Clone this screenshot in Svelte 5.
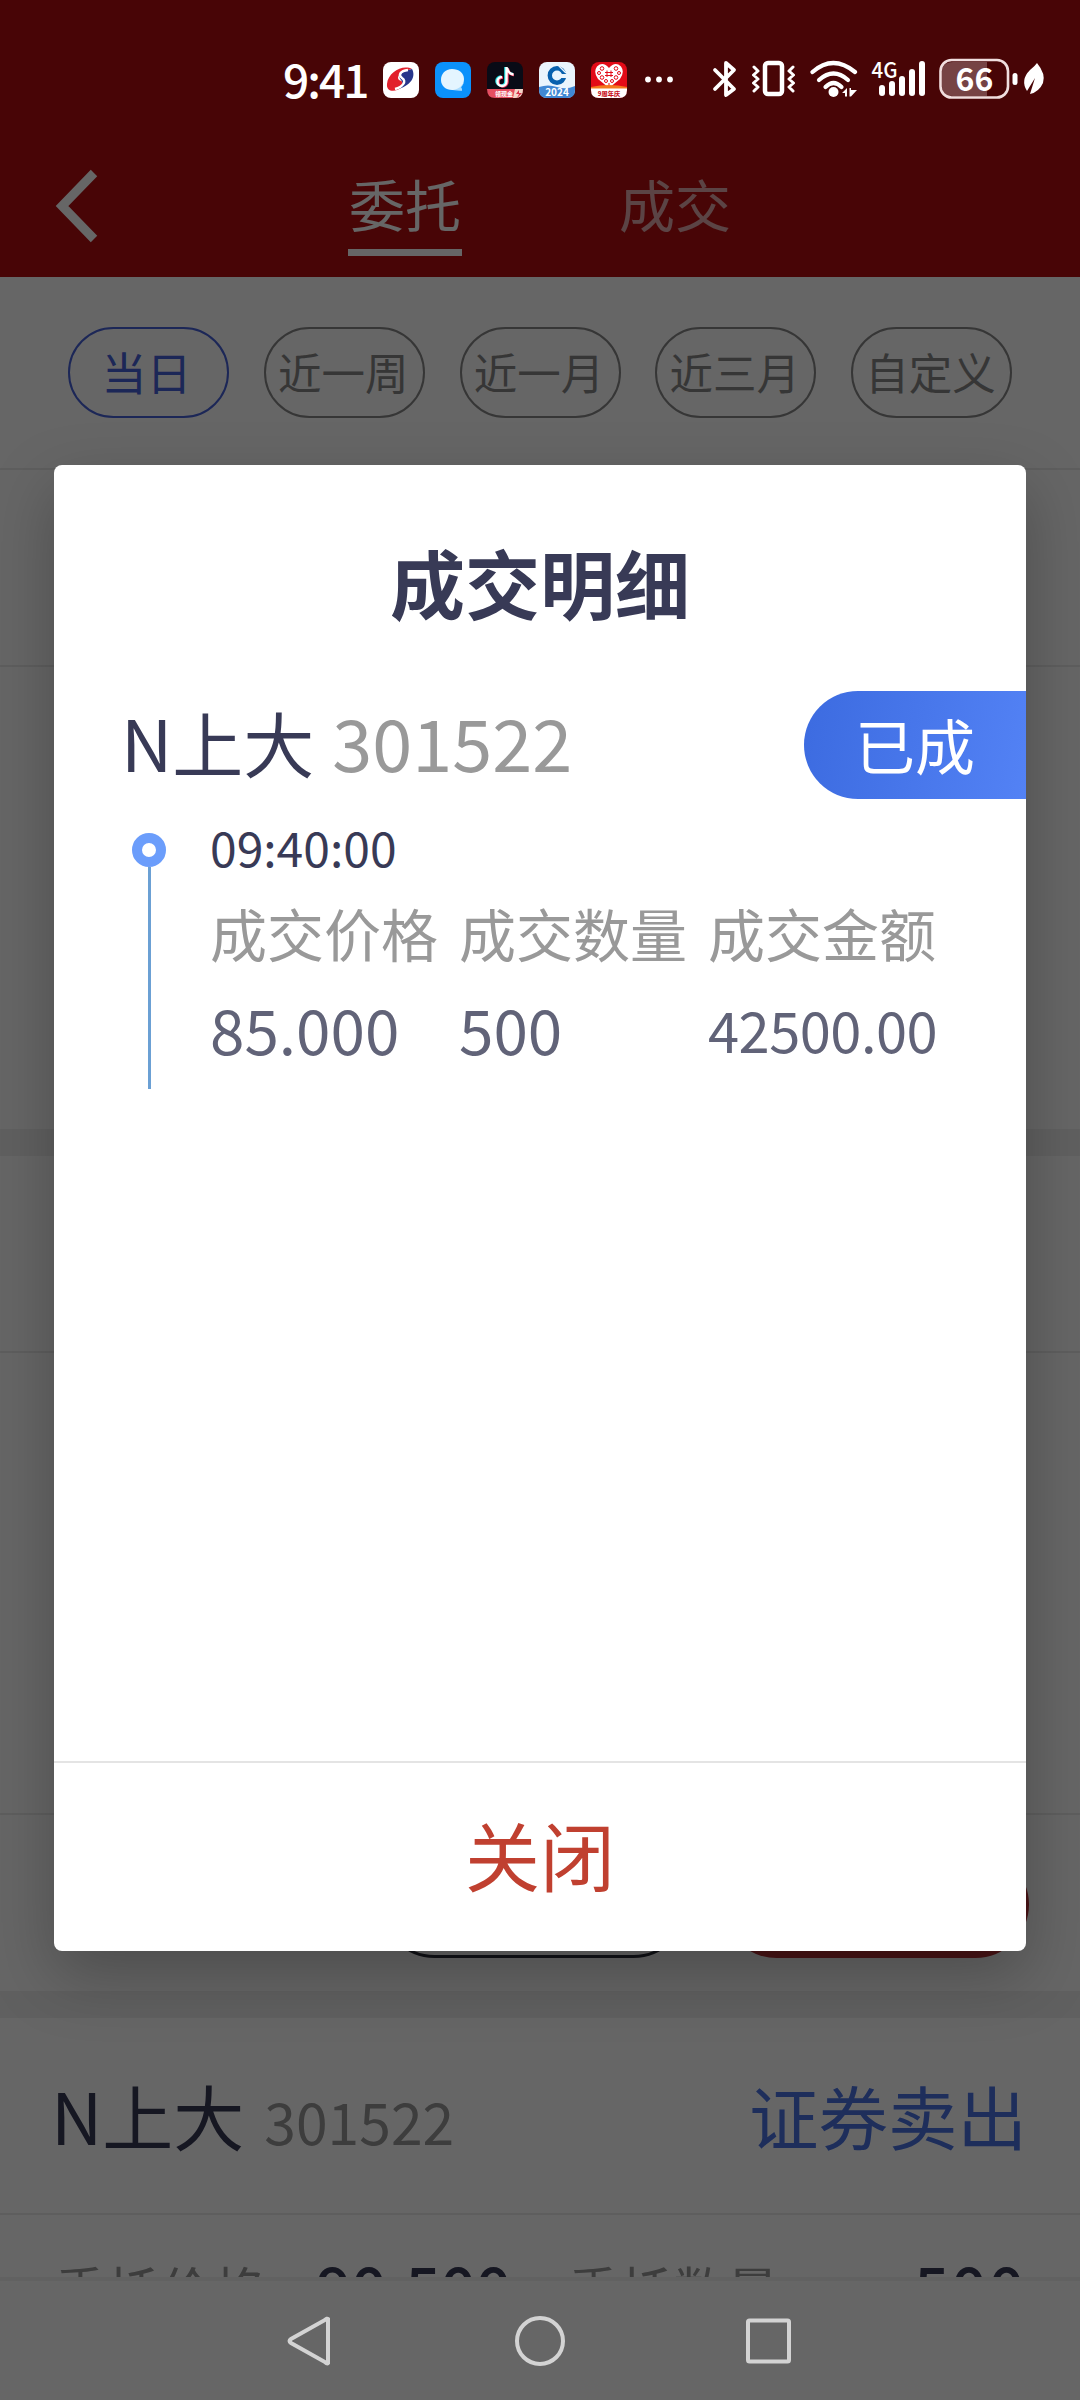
<script>
	let ranges = ['当日', '近一周', '近一月', '近三月', '自定义'];
	let selected = '当日';

	let stock = { name: 'N上大', code: '301522' };

	let deal = {
		time: '09:40:00',
		status: '已成',
		fields: [
			{ label: '成交价格', value: '85.000' },
			{ label: '成交数量', value: '500' },
			{ label: '成交金额', value: '42500.00', small: true }
		]
	};

	let showDetail = true;

	function selectRange(range) {
		selected = range;
	}

	function closeDetail() {
		showDetail = false;
	}
</script>

<main>
	<div class="page">
		<header>
			<div class="tabs">
				<svg class="back" viewBox="0 0 44 74"><path d="M40 4 L8 37 L40 70" fill="none" stroke="#fff" stroke-width="9" /></svg>
				<span class="tab active">委托</span>
				<span class="tab">成交</span>
			</div>
		</header>

		<div class="ranges">
			{#each ranges as range}
			<button class:selected={selected === range} on:click={() => selectRange(range)}>{range}</button>
			{/each}
		</div>

		<div class="order first">
			<div class="order-head"></div>
		</div>

		<div class="order second">
			<div class="order-head"></div>
			<div class="order-body"></div>
			<div class="order-actions">
				<div class="action"></div>
				<div class="action fill"></div>
			</div>
		</div>

		<div class="order last">
			<div class="order-head">
				<span class="name">{stock.name}</span>
				<span class="code">{stock.code}</span>
				<span class="side">证券卖出</span>
			</div>
			<div class="order-row">
				<span class="key">委托价格</span>
				<b>90.500</b>
				<span class="key second-key">委托数量</span>
				<b class="end">500</b>
			</div>
		</div>

		<div class="nav-bg"></div>
	</div>

	<div class="mask"></div>

	<div class="status-bar">
		<span class="clock">9:41</span>
		<svg class="app" viewBox="0 0 36 36">
			<rect width="36" height="36" rx="8" fill="#fff" />
			<path d="M29 7 C20 2 5 10 4 22 C3 31 14 30 19 25 C22 21 19 19 16 18 C13 15 17 9 29 7Z" fill="#e2202c" />
			<path d="M29 7 C33 14 29 24 12 28 C19 25 21 21 18 18 C14 14 19 9 29 7Z" fill="#27368b" />
			<path d="M25 8 C17 9 15 13 19 16 C24 19 20 25 12 27" fill="none" stroke="#fff" stroke-width="2.4" />
		</svg>
		<svg class="app" viewBox="0 0 36 36">
			<rect width="36" height="36" rx="8" fill="#0b91fb" />
			<path d="M17 7 C10 7 6 12 6 18 C6 24 11 28 17 28 L27 28.5 L26 25 C28 23 29 20 29 17 C29 11 24 7 17 7Z" fill="#e4f5ff" />
			<path d="M29 18 C29 23 24 27 18 28 L27 28.5 L26 25 C28 23 29 21 29 18Z" fill="#a9dcff" />
		</svg>
		<svg class="app" viewBox="0 0 36 36">
			<rect width="36" height="36" rx="8" fill="#090b16" />
			<path d="M18.500 5 V19 A4.500 4.500 0 1 1 14 14.500 M19 6 C20 10 22 12 26 12" fill="none" stroke="#25e5e8" stroke-width="2.600" />
			<path d="M20.500 6 V20 A4.500 4.500 0 1 1 16 15.500 M21 7 C22 11 24 13 27 13" fill="none" stroke="#f63b62" stroke-width="2.400" />
			<path d="M19.500 5 V19.500 A4.500 4.500 0 1 1 15 15 M20 6 C21 10 23 12 26.500 12.500" fill="none" stroke="#fff" stroke-width="2.400" />
			<path d="M0 27 H36 Q36 36 28 36 H8 Q0 36 0 27Z" fill="#e64e60" />
			<path d="M28 27 H36 Q36 36 28 36 L26 36Z" fill="#f5d5c8" />
			<path d="M32 28 L29 32 H32 L30 36 L35 31 H32Z" fill="#d83048" />
			<text x="8" y="34" font-size="6" font-weight="700" fill="#fff">领现金</text>
		</svg>
		<svg class="app" viewBox="0 0 36 36">
			<rect width="36" height="36" rx="8" fill="#eaf5fd" />
			<path d="M0 25 Q9 22 18 25 T36 24 V28 Q36 36 28 36 H8 Q0 36 0 28Z" fill="#4088d4" />
			<circle cx="18" cy="13.5" r="7.2" fill="none" stroke="#0861ae" stroke-width="4.4" />
			<path d="M18 9.5 L22 13.5 L18 17.5 L14 13.5Z M20.500 12 H30 V16 H20.500Z" fill="#eaf5fd" />
			<path d="M20 4 L27 11" stroke="#eaf5fd" stroke-width="1.4" />
			<text x="18" y="34" text-anchor="middle" font-size="10" font-weight="700" fill="#fff">2024</text>
		</svg>
		<svg class="app" viewBox="0 0 36 36">
			<rect width="36" height="36" rx="8" fill="#e30b17" />
			<path d="M18 26 L7 17 Q2 10 6 4.500 Q12 -1 18 6 Q24 -1 30 4.500 Q34 10 29 17Z" fill="#fff" />
			<g fill="none" stroke="#e30b17" stroke-width="1">
				<circle cx="11" cy="6.500" r="1.800" /><circle cx="25" cy="6.500" r="1.800" />
				<circle cx="8" cy="11" r="1.500" /><circle cx="28" cy="11" r="1.500" />
				<circle cx="11" cy="15.500" r="1.800" /><circle cx="25" cy="15.500" r="1.800" />
				<circle cx="15" cy="19" r="1.500" /><circle cx="21" cy="19" r="1.500" />
				<path d="M16 8.500 V15 M20 8.500 V15 M14 10.500 H22 M14 13.500 H22 M18 21 V24" />
			</g>
			<path d="M0 25 Q18 21 36 25 V28 H0Z" fill="#f4781d" />
			<path d="M0 26.5 H36 V28 Q36 36 28 36 H8 Q0 36 0 28Z" fill="#fff" />
			<text x="18" y="33.5" text-anchor="middle" font-size="6.2" font-weight="900" fill="#c8131d">9周年庆</text>
		</svg>
		<svg class="more" viewBox="0 0 30 36"><g fill="#fff"><circle cx="5" cy="17.5" r="2.9" /><circle cx="16" cy="17.5" r="2.9" /><circle cx="27" cy="17.5" r="2.9" /></g></svg>

		<!-- bluetooth, vibrate, wifi, signal, battery, power saving -->
		<svg class="system" viewBox="0 0 336 44">
			<g fill="none" stroke="#fff" stroke-width="3.8" stroke-linecap="round" stroke-linejoin="round">
				<path d="M3 12 L22 31 L14 37 V5 L22 12 L3 31" />
				<rect x="53" y="5" width="17" height="31" rx="3" stroke-width="4.5" />
				<path d="M42 9 L46 13 L41.500 17 L46 21 L41.500 25 L46 29 L42 33 M81 9 L77 13 L81.500 17 L77 21 L81.500 25 L77 29 L81 33" stroke-width="3" />
				<path d="M100.5 14 Q121 -4 143 14" stroke-width="4.2" />
				<path d="M107 22 Q121.5 9 136 22" stroke-width="4.2" />
				<path d="M113.5 29 Q121.500 21 129.5 29" stroke-width="4.2" />
			</g>
			<g fill="#fff">
				<circle cx="121.500" cy="34" r="5" />
				<path d="M130 35 L135 30 V38.500 H133 V35Z M137.500 30 H139 V32 H145 L139 38.500 H137.500Z" />
				<text x="159.5" y="19.500" font-size="22" font-weight="500" textLength="26" lengthAdjust="spacingAndGlyphs">4G</text>
				<rect x="167" y="27" width="6" height="11" rx="3" />
				<rect x="177" y="23" width="6" height="15" rx="3" />
				<rect x="187" y="18" width="6" height="20" rx="3" />
				<rect x="197" y="11" width="6" height="27" rx="3" />
				<rect x="207" y="3" width="6" height="35" rx="3" />
				<path d="M241 4 H275 V38 H241 Q230 38 230 28 V14 Q230 4 241 4Z" fill-opacity=".25" />
				<rect x="300.5" y="15" width="5" height="12" rx="2.5" />
				<path d="M325 5 Q334 16 331 25 Q327 34 318 36 L323 20 L315 33 Q308 22 318 12 Q323 8 325 5Z" />
				<text x="262.500" y="32.500" text-anchor="middle" font-size="32" font-weight="700">66</text>
			</g>
			<rect x="228.5" y="2" width="67.5" height="37.5" rx="11" fill="none" stroke="#f0dede" stroke-width="2.6" />
		</svg>
	</div>

	{#if showDetail}
	<div class="dialog">
		<h2>成交明细</h2>
		<div class="dialog-head">
			<div class="stock">
				<span class="name">{stock.name}</span>
				<span class="code">{stock.code}</span>
			</div>
			<span class="badge">{deal.status}</span>
		</div>
		<div class="deal">
			<div class="timeline">
				<i class="dot"></i>
				<i class="line"></i>
			</div>
			<div class="deal-body">
				<div class="time">{deal.time}</div>
				<div class="fields">
					{#each deal.fields as field}
					<div class="field">
						<span class="label">{field.label}</span>
						<span class="value" class:small={field.small}>{field.value}</span>
					</div>
					{/each}
				</div>
			</div>
		</div>
		<button class="close" on:click={closeDetail}>关闭</button>
	</div>
	{/if}

	<div class="nav">
		<svg viewBox="0 0 52 52"><path d="M44 4 V48 Q43 49 41 47 L7 28 Q4 26 7 24 L41 5 Q43 3 44 4Z" fill="none" stroke="#d3d3d3" stroke-width="4" /></svg>
		<svg viewBox="0 0 52 52"><circle cx="26" cy="26" r="23" fill="none" stroke="#d3d3d3" stroke-width="4" /></svg>
		<svg viewBox="0 0 52 52"><rect x="4" y="5.5" width="41" height="41" rx="1.5" fill="none" stroke="#d3d3d3" stroke-width="4" /></svg>
	</div>
</main>

<style>
	:global(body) {
		margin: 0;
	}

	main {
		position: relative;
		width: 1080px;
		height: 2400px;
		overflow: hidden;
		font-family: "Noto Sans CJK SC", sans-serif;
	}

	button {
		font-family: inherit;
		padding: 0;
		background: none;
		cursor: pointer;
	}

	.page {
		display: flex;
		flex-direction: column;
		height: 2400px;
		background: #fff;
	}

	header {
		height: 277px;
		box-sizing: border-box;
		padding-top: 130px;
		background: #b40e11;
	}

	.tabs {
		display: flex;
		align-items: flex-start;
	}

	.back {
		width: 44px;
		height: 74px;
		margin: 39px 250px 0 54px;
	}

	.tab {
		width: 114px;
		height: 119px;
		margin: 7px 156px 0 0;
		line-height: 132px;
		font-size: 56px;
		text-align: center;
		color: #fff;
		opacity: .65;
		white-space: nowrap;
	}

	.tab.active {
		border-bottom: 7px solid #fff;
		height: 112px;
		opacity: 1;
	}

	.ranges {
		display: flex;
		justify-content: space-between;
		height: 193px;
		box-sizing: border-box;
		padding: 50px 68px 0;
		border-bottom: 2px solid #ebebeb;
	}

	.ranges button {
		width: 161px;
		height: 91px;
		padding: 0 2px 3px 0;
		border: 2px solid #888;
		border-radius: 46px;
		font-size: 43.5px;
		color: #888;
		white-space: nowrap;
	}

	.ranges .selected {
		padding-right: 4px;
		border-color: #4761d9;
		font-size: 45px;
		color: #4761d9;
	}

	.order {
		box-sizing: border-box;
		border-bottom: 27px solid #efefef;
	}

	.first {
		height: 686px;
	}

	.second {
		height: 862px;
	}

	.last {
		flex: none;
		height: 259px;
		overflow: hidden;
		border: none;
	}

	.order-head {
		display: flex;
		align-items: baseline;
		height: 197px;
		box-sizing: border-box;
		padding: 0 53px 0 51px;
		border-bottom: 2px solid #ebebeb;
		line-height: 192px;
	}

	.name {
		font-size: 71px;
		color: #383a56;
	}

	.code {
		margin-left: 20px;
		font-size: 57px;
		color: #999;
	}

	.side {
		margin-left: auto;
		font-size: 69.5px;
		color: #4b74e4;
	}

	.order-body {
		height: 460px;
		border-bottom: 2px solid #ebebeb;
	}

	.order-actions {
		display: flex;
		justify-content: flex-end;
		gap: 36px;
		padding: 36px 51px 0;
	}

	.action {
		width: 306px;
		height: 107px;
		box-sizing: border-box;
		border: 3px solid #2c2d38;
		border-radius: 54px;
	}

	.fill {
		border: none;
		background: #b83438;
	}

	.order-row {
		display: flex;
		align-items: baseline;
		padding: 0 54px;
		line-height: 140px;
	}

	.key {
		width: 262px;
		font-size: 53px;
		color: #999;
	}

	.second-key {
		margin-left: 56px;
	}

	.order-row b {
		font-size: 62px;
		font-weight: 500;
		color: #383a56;
	}

	.order-row .end {
		margin-left: auto;
		letter-spacing: 2px;
	}

	.nav-bg {
		flex: 1;
		border-top: 4px solid #f3f3f3;
	}

	.mask {
		position: absolute;
		inset: 0;
		background: rgba(0, 0, 0, .6);
	}

	.status-bar {
		position: absolute;
		top: 57px;
		left: 283px;
		display: flex;
		align-items: center;
		height: 46px;
		color: #fff;
	}

	.clock {
		width: 100px;
		padding-bottom: 4px;
		font-size: 46px;
		font-weight: 500;
		line-height: 46px;
		letter-spacing: -2px;
	}

	.app {
		width: 36px;
		height: 36px;
		margin-right: 16px;
	}

	.more {
		width: 30px;
		height: 36px;
	}

	.system {
		width: 336px;
		height: 44px;
		margin-left: 39px;
	}

	.dialog {
		position: absolute;
		top: 465px;
		left: 54px;
		display: flex;
		flex-direction: column;
		width: 972px;
		height: 1486px;
		border-radius: 8px;
		background: #fff;
		box-shadow: 0 24px 64px rgba(0, 0, 0, .25);
	}

	h2 {
		margin: 62px 0 0;
		font-size: 75px;
		font-weight: 700;
		line-height: 110px;
		text-align: center;
		color: #383a56;
	}

	.dialog-head {
		display: flex;
		height: 108px;
		margin-top: 54px;
		padding-left: 67px;
		line-height: 108px;
	}

	.stock {
		display: flex;
		align-items: baseline;
		height: 100px;
		line-height: 100px;
	}

	.dialog-head .code {
		margin-left: 18px;
		font-size: 72px;
	}

	.badge {
		width: 222px;
		height: 108px;
		box-sizing: border-box;
		margin-left: auto;
		padding-left: 51px;
		border-radius: 54px 0 0 54px;
		background: linear-gradient(100deg, #3c6be0, #5382f5);
		font-size: 60px;
		line-height: 106px;
		color: #fff;
	}

	.deal {
		display: flex;
		margin: 14px 0 0 78px;
	}

	.timeline {
		display: flex;
		flex-direction: column;
		align-items: center;
		width: 34px;
		margin: 20px 44px 0 0;
	}

	.dot {
		width: 14px;
		height: 14px;
		border: 10px solid #6b9dfb;
		border-radius: 50%;
	}

	.line {
		width: 3px;
		height: 222px;
		background: #6ba0d4;
	}

	.time {
		height: 70px;
		line-height: 66px;
		font-size: 48px;
		color: #383a56;
	}

	.fields {
		display: flex;
	}

	.field {
		display: flex;
		flex-direction: column;
		width: 249px;
		white-space: nowrap;
	}

	.label {
		line-height: 98px;
		font-size: 57px;
		color: #999;
	}

	.value {
		line-height: 95px;
		font-size: 62px;
		color: #616378;
	}

	.value.small {
		font-size: 56px;
		letter-spacing: -.5px;
	}

	.close {
		height: 190px;
		margin-top: auto;
		padding-bottom: 8px;
		border: none;
		border-top: 2px solid #e4e4e4;
		font-size: 75px;
		color: #c04030;
	}

	.nav {
		position: absolute;
		bottom: 33px;
		left: 284px;
		display: flex;
		gap: 178px;
	}

	.nav svg {
		width: 52px;
		height: 52px;
	}
</style>
